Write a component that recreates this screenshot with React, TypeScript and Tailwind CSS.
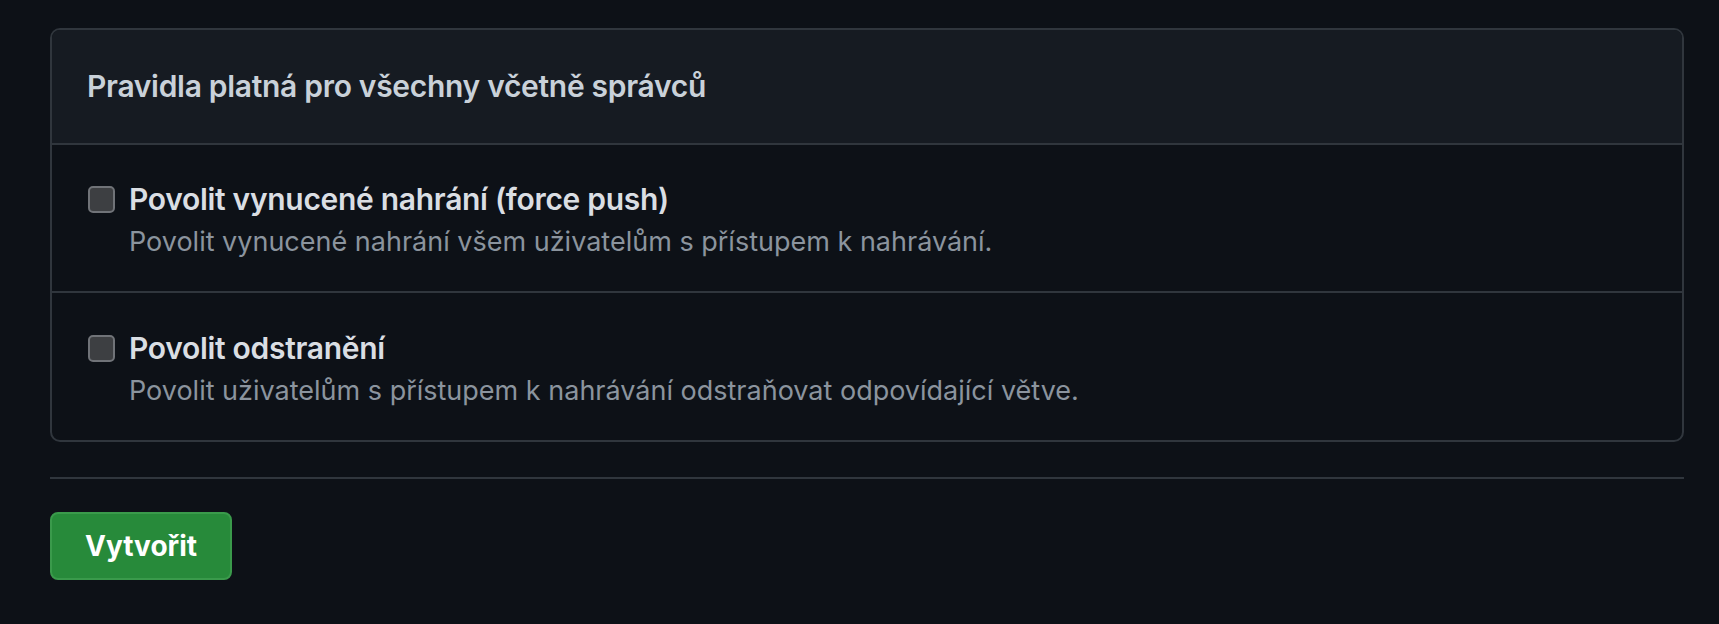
const rules = [
  {
    title: 'Povolit vynucené nahrání (force push)',
    desc: 'Povolit vynucené nahrání všem uživatelům s přístupem k nahrávání.',
  },
  {
    title: 'Povolit odstranění',
    desc: 'Povolit uživatelům s přístupem k nahrávání odstraňovat odpovídající větve.',
  },
];

const App = () => {
  return (
    <main className="min-h-screen bg-[#0d1117] pl-[50px] pr-[35px] pt-[28px] font-['Inter',sans-serif]">
      {/* Rules box */}
      <section className="rounded-[10px] border-2 border-[#30363d] overflow-hidden">
        <div className="h-[115px] bg-[#161b22] border-b-2 border-[#30363d] flex items-center px-[35px]">
          <h2 className="text-[30px] font-semibold text-[#c9d1d9] tracking-[-0.3px]">
            Pravidla platná pro všechny včetně správců
          </h2>
        </div>
        {rules.map((rule, i) => (
          <div
            key={rule.title}
            className={
              i === 0
                ? 'h-[148px] flex items-start gap-[14px] pl-[36px] pt-[36px] border-b-2 border-[#30363d]'
                : 'h-[147px] flex items-start gap-[14px] pl-[36px] pt-[37px]'
            }
          >
            <input
              type="checkbox"
              className="appearance-none mt-[5px] w-[27px] h-[27px] rounded-[5px] border-2 border-[#707378] bg-[#3d3f42] shrink-0"
            />
            <div className="flex flex-col">
              <span className="text-[30px] font-semibold text-[#dadee3] leading-[36px] tracking-[-0.3px]">
                {rule.title}
              </span>
              <span className="text-[27px] text-[#8b949e] leading-[36px] mt-[7px]">{rule.desc}</span>
            </div>
          </div>
        ))}
      </section>

      <hr className="mt-[35px] border-t-2 border-[#30363d]" />

      <button className="mt-[33px] w-[182px] h-[68px] rounded-[8px] bg-[#278a3a] border-2 border-[#3a9a4b] text-white text-[28px] font-bold">
        Vytvořit
      </button>
    </main>
  );
};

export default App;
